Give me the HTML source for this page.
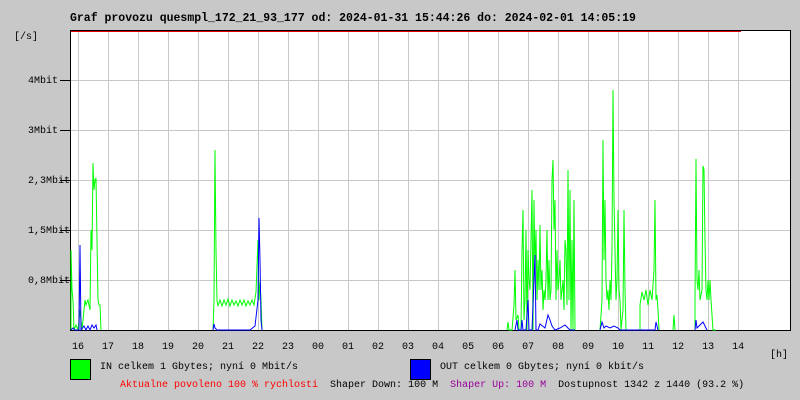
<!DOCTYPE html>
<html><head><meta charset="utf-8"><style>
body{margin:0;width:800px;height:400px;background:#c8c8c8;overflow:hidden;font-family:"Liberation Mono",monospace;}
.t{position:absolute;white-space:pre;font-size:10px;line-height:12px;color:#000}
</style></head><body>
<div class="t" style="left:70px;top:13px;font-size:11.5px;font-weight:bold;">Graf provozu quesmpl_172_21_93_177 od: 2024-01-31 15:44:26 do: 2024-02-01 14:05:19</div>
<svg width="800" height="400" style="position:absolute;left:0;top:0">
<rect x="70.5" y="30.5" width="720" height="300" fill="#fff" stroke="#000"/>
<g stroke="#c8c8c8" stroke-width="1">
<path d="M78.5 31V330M108.5 31V330M138.5 31V330M168.5 31V330M198.5 31V330M228.5 31V330M258.5 31V330M288.5 31V330M318.5 31V330M348.5 31V330M378.5 31V330M408.5 31V330M438.5 31V330M468.5 31V330M498.5 31V330M528.5 31V330M558.5 31V330M588.5 31V330M618.5 31V330M648.5 31V330M678.5 31V330M708.5 31V330M738.5 31V330"/>
<path d="M71 80.5H790M71 130.5H790M71 180.5H790M71 230.5H790M71 280.5H790"/>
</g>
<path d="M71 31.5H741" stroke="#e00000"/>
<g fill="none" stroke="#00ff00" stroke-width="1">
<polyline points="71,330 71,250 72,290 73,300 74,330 76,325 78,330 80,310 82,330 85,300 86,305 88,300 90,310 91,230 92,250 93,163 94,190 95,180 96,178 97,240 98,300 99,305 100,305 101,330"/>
<polyline points="213,330 214,300 215,150 216,250 217,300 218,306 220,300 222,306 224,300 226,305 228,299 230,306 232,300 234,305 236,301 238,306 240,300 242,305 244,300 246,306 248,301 250,305 252,300 254,305 256,292 258,240 259,300 260,282 261,300 262,330"/>
<polyline points="507,330 508,322 509,330 512,330 514,305 515,270 516,320 518,315 519,330 521,330 522,250 523,210 524,320 525,300 526,230 527,330 528,250 529,280 530,290 532,190 533,330 534,200 535,270 536,230 537,300 538,260 539,290 540,225 541,290 542,270 543,310 544,290 545,300 546,280 547,230 548,300 549,260 550,300 551,290 552,180 553,160 554,230 555,200 556,300 557,250 558,290 559,280 560,260 561,300 562,290 563,280 564,310 565,240 566,250 567,305 568,170 569,300 570,190 571,330 572,240 573,330 574,200 575,330"/>
<polyline points="600,330 602,300 603,140 604,260 605,200 606,280 607,300 608,290 609,310 610,280 611,300 612,250 613,90 614,200 615,250 616,300 617,280 618,210 619,290 620,300 621,330 623,310 624,210 625,290 626,330"/>
<polyline points="640,330 640,305 642,292 644,300 646,290 648,305 650,290 652,300 654,270 655,200 656,300 657,295 658,310 659,330"/>
<polyline points="673,330 674,315 675,330"/>
<polyline points="695,330 695,300 696,159 697,280 698,290 699,270 700,300 702,290 703,166 704,170 705,240 706,290 707,300 708,280 709,300 710,280 711,300 712,315 713,330 716,330"/>
</g>
<g fill="none" stroke="#0000ff" stroke-width="1">
<polyline points="71,330 73,328 75,330 79,330 80,245 81,330 84,326 86,330 88,326 90,330 92,325 94,328 96,325 97,330"/>
<polyline points="213,330 214,324 215,328 217,330 250,330 255,326 258,300 259,218 260,260 261,320 262,330"/>
<polyline points="515,330 517,320 518,330 520,330 521,330 522,320 523,330 526,330 528,300 529,330 532,330 535,255 536,330 538,330 540,324 545,328 548,315 550,320 552,326 555,330 560,328 565,325 570,330 575,330"/>
<polyline points="600,330 602,322 604,328 606,326 610,328 614,326 618,328 620,330 655,330 656,322 658,330"/>
<polyline points="695,330 696,320 697,328 700,325 703,322 705,326 707,330"/>
</g>
<g stroke="#000"><path d="M60 80.5H71M60 130.5H71M60 180.5H71M60 230.5H71M60 280.5H71"/></g>
<rect x="70.5" y="359.5" width="20" height="20" fill="#00ff00" stroke="#000"/>
<rect x="410.5" y="359.5" width="20" height="20" fill="#0000ff" stroke="#000"/>
</svg>
<div class="t" style="left:14px;top:32px;">[/s]</div>
<div class="t" style="left:18px;top:76px;width:40px;text-align:right">4Mbit</div>
<div class="t" style="left:8px;top:126px;width:50px;text-align:right">3Mbit</div>
<div class="t" style="left:0px;top:176px;width:70px;text-align:right">2,3Mbit</div>
<div class="t" style="left:0px;top:226px;width:70px;text-align:right">1,5Mbit</div>
<div class="t" style="left:0px;top:276px;width:70px;text-align:right">0,8Mbit</div>
<div class="t" style="left:72px;top:342px;word-spacing:0">16   17   18   19   20   21   22   23   00   01   02   03   04   05   06   07   08   09   10   11   12   13   14</div>
<div class="t" style="left:770px;top:350px;">[h]</div>
<div class="t" style="left:100px;top:362px;">IN celkem 1 Gbytes; nyní 0 Mbit/s</div>
<div class="t" style="left:440px;top:362px;">OUT celkem 0 Gbytes; nyní 0 kbit/s</div>
<div class="t" style="left:120px;top:380px;"><span style="color:#ff0000">Aktualne povoleno 100 % rychlosti</span>  Shaper Down: 100 M  <span style="color:#990099">Shaper Up: 100 M</span>  Dostupnost 1342 z 1440 (93.2 %)</div>
</body></html>
